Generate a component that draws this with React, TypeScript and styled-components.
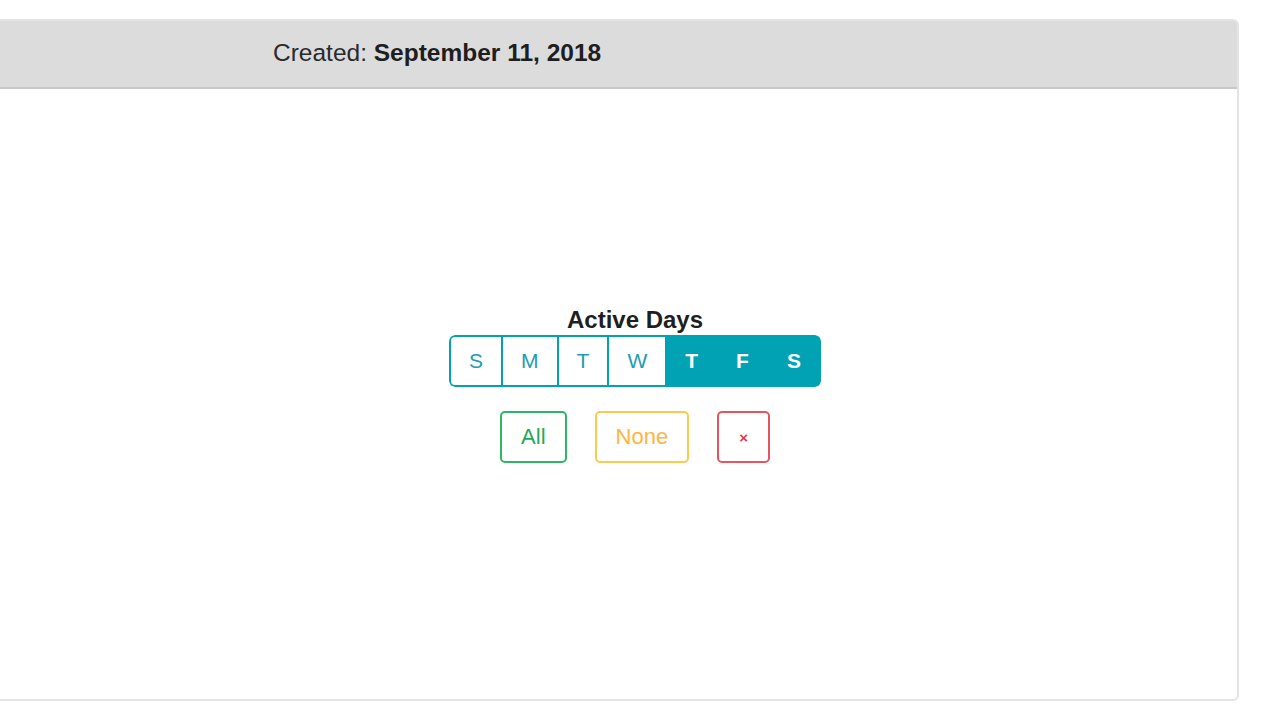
import React from "react";
import styled, { createGlobalStyle } from "styled-components";

const Global = createGlobalStyle`
  html, body { margin: 0; padding: 0; background: #ffffff; }
  body { font-family: "Liberation Sans", Arial, Helvetica, sans-serif; color: #222; }
  * { box-sizing: border-box; }
`;

const Page = styled.div`
  width: 1275px;
  height: 714px;
  overflow: hidden;
  padding-top: 19px;
`;

const Card = styled.div`
  margin-left: -33px;
  width: 1272px;
  height: 682px;
  border: 2px solid #e4e4e4;
  border-radius: 6px;
  background: #ffffff;
  display: flex;
  flex-direction: column;
  overflow: hidden;
`;

const Header = styled.div`
  height: 68px;
  background: #dcdcdc;
  border-bottom: 2px solid #c9c9c9;
  display: flex;
  align-items: center;
  padding-left: 304px;
  padding-bottom: 3px;
  font-size: 24.5px;
  color: #2a2a2a;
`;

const Strong = styled.strong`
  font-weight: 700;
  color: #1e1e1e;
`;

const Body = styled.div`
  flex: 1;
  display: flex;
  flex-direction: column;
  align-items: center;
  padding-top: 217px;
  padding-left: 64px;
`;

const Title = styled.div`
  font-size: 24px;
  line-height: 28px;
  font-weight: 700;
  color: #1f1f1f;
  margin-bottom: 1px;
`;

const DayGroup = styled.div`
  display: flex;
  height: 52px;
  border-radius: 6px;
  overflow: hidden;
`;

const Day = styled.button<{ $active: boolean }>`
  height: 52px;
  padding: 0 18px;
  margin-left: -2px;
  border: 2px solid #00a2b4;
  background: ${(p) => (p.$active ? "#00a2b4" : "#ffffff")};
  color: ${(p) => (p.$active ? "#ffffff" : "#1c9db0")};
  font-family: "Liberation Sans", Arial, sans-serif;
  font-size: 21px;
  font-weight: ${(p) => (p.$active ? 700 : 400)};
  cursor: pointer;
  &:first-child {
    margin-left: 0;
    border-radius: 6px 0 0 6px;
  }
  &:last-child {
    border-radius: 0 6px 6px 0;
  }
`;

const Actions = styled.div`
  display: flex;
  gap: 28px;
  margin-top: 24px;
`;

const ActionButton = styled.button<{ $color: string; $text: string; $small?: boolean }>`
  height: 52px;
  padding: 0 ${(p) => (p.$small ? 20 : 19)}px;
  border: 2px solid ${(p) => p.$color};
  border-radius: 5px;
  background: #ffffff;
  color: ${(p) => p.$text};
  font-family: "Liberation Sans", Arial, sans-serif;
  font-size: ${(p) => (p.$small ? 15 : 22)}px;
  font-weight: ${(p) => (p.$small ? 700 : 400)};
  cursor: pointer;
`;

const days = [
  { l: "S", a: false },
  { l: "M", a: false },
  { l: "T", a: false },
  { l: "W", a: false },
  { l: "T", a: true },
  { l: "F", a: true },
  { l: "S", a: true },
];

export default function App() {
  return (
    <>
      <Global />
      <Page>
        <Card>
          <Header>
            <span>
              Created: <Strong>September 11, 2018</Strong>
            </span>
          </Header>
          <Body>
            <Title>Active Days</Title>
            <DayGroup>
              {days.map((d, i) => (
                <Day key={i} $active={d.a}>
                  {d.l}
                </Day>
              ))}
            </DayGroup>
            <Actions>
              <ActionButton $color="#2cb766" $text="#23a85a">All</ActionButton>
              <ActionButton $color="#ffc94d" $text="#ffb53f">None</ActionButton>
              <ActionButton $color="#e65462" $text="#e03a4e" $small>
                ×
              </ActionButton>
            </Actions>
          </Body>
        </Card>
      </Page>
    </>
  );
}
